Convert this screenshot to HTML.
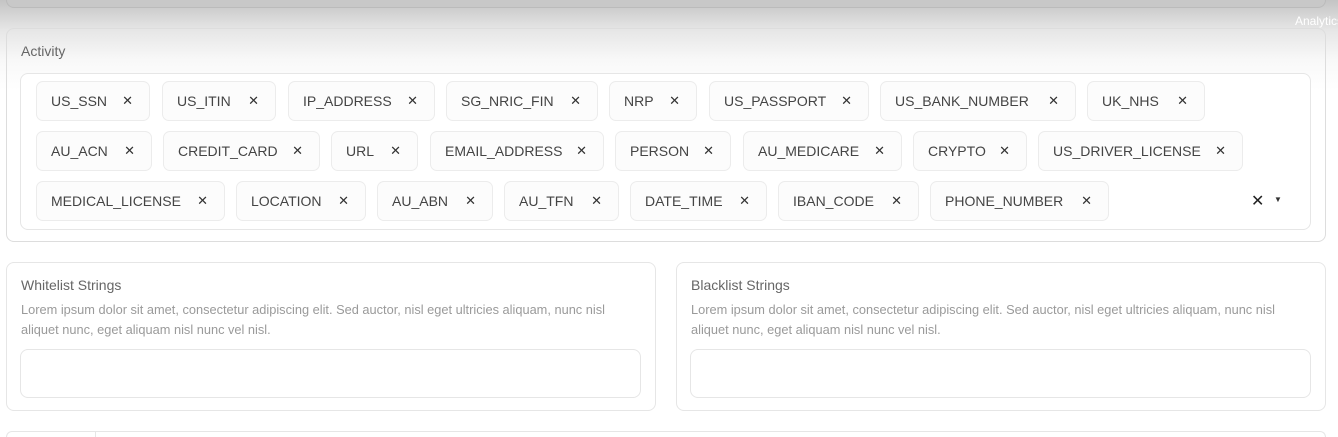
<!DOCTYPE html>
<html style="background:#fff"><head><style>
html,body{margin:0;width:1338px;height:437px;overflow:hidden}
body{font-family:"Liberation Sans",sans-serif;background:linear-gradient(#c4c4c4 0px,#e6e6e6 30px,#f8f8f8 60px,#fff 90px) no-repeat;background-size:1338px 437px;position:relative}
.a{position:absolute;box-sizing:border-box}
.box{border:1px solid #e6e6e6;border-radius:8px;background:transparent}
.chip{position:absolute;height:40px;border:1px solid #ececec;border-radius:7px;background:#fcfcfc;font-size:14px;color:#444;line-height:38px;padding-left:14px;box-sizing:border-box;white-space:nowrap}
.chip b{font-weight:normal;position:absolute;right:16px;top:0;font-size:13px;color:#333}
.lbl{font-size:14px;color:#666}
.desc{font-size:12.8px;color:#9a9a9a;line-height:20px}
</style></head><body>
<div class="a" style="left:6px;top:0;width:1320px;height:8px;border:1px solid #bbb;border-top:none;border-radius:0 0 8px 8px;background:#c8c8c8"></div>
<div class="a" style="left:1295px;top:14px;font-size:12px;color:#fff">Analytics</div>
<div class="a box" style="left:6px;top:28px;width:1320px;height:214px;border-color:#ddd"></div>
<div class="a lbl" style="left:21px;top:43px">Activity</div>
<div class="a box" style="left:20px;top:73px;width:1291px;height:157px;background:#fff"></div>
<div class="chip" style="left:36px;top:81px;width:114px">US_SSN<b>✕</b></div>
<div class="chip" style="left:162px;top:81px;width:114px">US_ITIN<b>✕</b></div>
<div class="chip" style="left:288px;top:81px;width:147px">IP_ADDRESS<b>✕</b></div>
<div class="chip" style="left:446px;top:81px;width:152px">SG_NRIC_FIN<b>✕</b></div>
<div class="chip" style="left:609px;top:81px;width:88px">NRP<b>✕</b></div>
<div class="chip" style="left:709px;top:81px;width:160px">US_PASSPORT<b>✕</b></div>
<div class="chip" style="left:880px;top:81px;width:196px">US_BANK_NUMBER<b>✕</b></div>
<div class="chip" style="left:1087px;top:81px;width:118px">UK_NHS<b>✕</b></div>
<div class="chip" style="left:36px;top:131px;width:116px">AU_ACN<b>✕</b></div>
<div class="chip" style="left:163px;top:131px;width:157px">CREDIT_CARD<b>✕</b></div>
<div class="chip" style="left:331px;top:131px;width:87px">URL<b>✕</b></div>
<div class="chip" style="left:430px;top:131px;width:174px">EMAIL_ADDRESS<b>✕</b></div>
<div class="chip" style="left:615px;top:131px;width:116px">PERSON<b>✕</b></div>
<div class="chip" style="left:743px;top:131px;width:159px">AU_MEDICARE<b>✕</b></div>
<div class="chip" style="left:913px;top:131px;width:114px">CRYPTO<b>✕</b></div>
<div class="chip" style="left:1038px;top:131px;width:205px">US_DRIVER_LICENSE<b>✕</b></div>
<div class="chip" style="left:36px;top:181px;width:189px">MEDICAL_LICENSE<b>✕</b></div>
<div class="chip" style="left:236px;top:181px;width:130px">LOCATION<b>✕</b></div>
<div class="chip" style="left:377px;top:181px;width:116px">AU_ABN<b>✕</b></div>
<div class="chip" style="left:504px;top:181px;width:115px">AU_TFN<b>✕</b></div>
<div class="chip" style="left:630px;top:181px;width:137px">DATE_TIME<b>✕</b></div>
<div class="chip" style="left:778px;top:181px;width:141px">IBAN_CODE<b>✕</b></div>
<div class="chip" style="left:930px;top:181px;width:179px">PHONE_NUMBER<b>✕</b></div>
<div class="a" style="left:1251px;top:191px;font-size:16px;color:#222">✕</div>
<div class="a" style="left:1274px;top:195px;font-size:8px;color:#333">▼</div>

<div class="a box" style="left:6px;top:262px;width:650px;height:149px"></div>
<div class="a lbl" style="left:21px;top:277px">Whitelist Strings</div>
<div class="a desc" style="left:21px;top:300px;width:615px">Lorem ipsum dolor sit amet, consectetur adipiscing elit. Sed auctor, nisl eget ultricies aliquam, nunc nisl aliquet nunc, eget aliquam nisl nunc vel nisl.</div>
<div class="a box" style="left:20px;top:349px;width:621px;height:49px"></div>

<div class="a box" style="left:676px;top:262px;width:650px;height:149px"></div>
<div class="a lbl" style="left:691px;top:277px">Blacklist Strings</div>
<div class="a desc" style="left:691px;top:300px;width:615px">Lorem ipsum dolor sit amet, consectetur adipiscing elit. Sed auctor, nisl eget ultricies aliquam, nunc nisl aliquet nunc, eget aliquam nisl nunc vel nisl.</div>
<div class="a box" style="left:690px;top:349px;width:621px;height:49px"></div>

<div class="a" style="left:6px;top:431px;width:1320px;height:6px;border:1px solid #e6e6e6;border-bottom:none;border-radius:8px 8px 0 0"></div>
<div class="a" style="left:95px;top:431px;width:1px;height:6px;background:#e6e6e6"></div>
</body></html>
